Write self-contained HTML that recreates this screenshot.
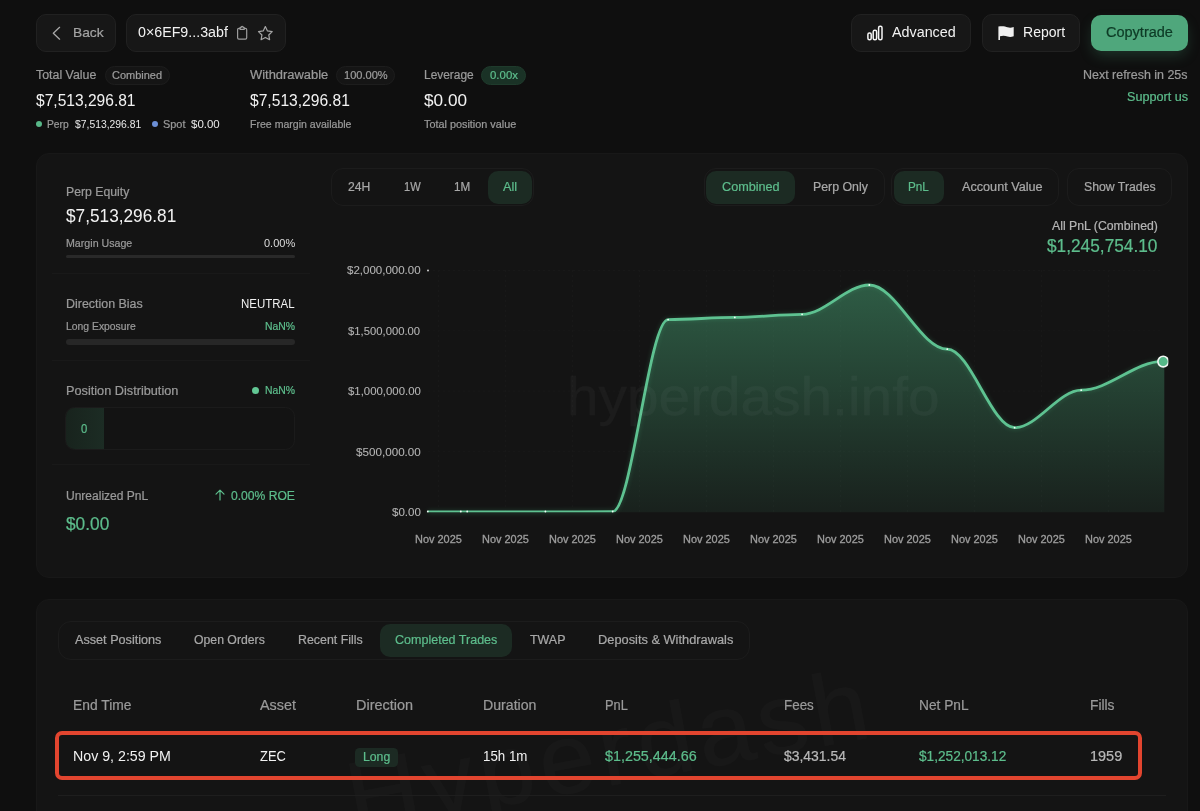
<!DOCTYPE html>
<html><head><meta charset="utf-8"><title>Trader</title>
<style>
html,body{margin:0;padding:0;background:#0f0f0f;width:1200px;height:811px;overflow:hidden;}
body{width:1200px;height:811px;position:relative;overflow:hidden;font-family:"Liberation Sans",sans-serif;}
.t{position:absolute;white-space:pre;line-height:1;transform-origin:0 0;}
.b{position:absolute;box-sizing:border-box;}
svg{position:absolute;left:0;top:0;overflow:visible;}
#root{position:absolute;left:0;top:0;width:1200px;height:811px;overflow:hidden;background:#0f0f0f;}
</style></head><body><div id="root">
<div class="b" style="left:35.80px;top:14.20px;width:80.40px;height:37.50px;background:#171717;border:1px solid #212121;border-radius:10px;"></div>
<svg width="1200" height="811"><path d="M59.6 27.3 L53.3 33.25 L59.6 39.2" fill="none" stroke="#a8a8a8" stroke-width="1.25" stroke-linecap="round" stroke-linejoin="round"/></svg>
<span class="t" style="left:73.30px;top:26.00px;font-size:13.5px;color:#a3a3a3;transform:scaleX(1.0212);-webkit-text-stroke:0.22px #a3a3a3;">Back</span>
<div class="b" style="left:126.40px;top:14.20px;width:159.30px;height:37.50px;background:#171717;border:1px solid #212121;border-radius:10px;"></div>
<span class="t" style="left:137.60px;top:25.25px;font-size:14px;color:#f2f2f2;transform:scaleX(1.0173);">0×6EF9...3abf</span>
<svg width="1200" height="811"><g fill="none" stroke="#9c9c9c" stroke-width="1.2" stroke-linejoin="round" stroke-linecap="round">
<path d="M240 28.4 H238.9 a1.3 1.3 0 0 0 -1.3 1.3 V37.8 a1.3 1.3 0 0 0 1.3 1.3 H245.4 a1.3 1.3 0 0 0 1.3 -1.3 V29.7 a1.3 1.3 0 0 0 -1.3 -1.3 H244.3"/>
<path d="M240 29.3 V28 a0.6 0.6 0 0 1 .6 -.6 H241.1 a1.05 1.05 0 0 1 2.1 0 H243.7 a0.6 0.6 0 0 1 .6 .6 V29.3 Z"/>
<path d="M265.35 26.6 L267.45 30.95 L272.2 31.6 L268.75 34.95 L269.6 39.7 L265.35 37.45 L261.1 39.7 L261.95 34.95 L258.5 31.6 L263.25 30.95 Z" stroke="#a6a6a6"/>
</g></svg>
<div class="b" style="left:851.00px;top:14.20px;width:120.20px;height:37.50px;background:#171717;border:1px solid #212121;border-radius:10px;"></div>
<svg width="1200" height="811"><g fill="none" stroke="#f6f6f6" stroke-width="1.5">
<rect x="867.9" y="32.9" width="3.3" height="6.9" rx="1.5"/>
<rect x="873.2" y="30.2" width="3.4" height="9.6" rx="1.5"/>
<rect x="878.6" y="26.3" width="3.4" height="13.5" rx="1.5"/>
</g></svg>
<span class="t" style="left:891.80px;top:25.25px;font-size:14px;color:#f2f2f2;transform:scaleX(1.0233);">Advanced</span>
<div class="b" style="left:981.50px;top:14.20px;width:98.30px;height:37.50px;background:#171717;border:1px solid #212121;border-radius:10px;"></div>
<svg width="1200" height="811"><path d="M998.4 26.6 V40 H1000 V36.3 C1003 35.2 1005.5 35.8 1007.5 36.5 C1009.5 37.2 1011.5 37.1 1013.7 36.2 V27 C1011.5 27.9 1009.5 28 1007.5 27.3 C1005.5 26.6 1002.5 25.8 998.4 26.6 Z" fill="#efefef"/></svg>
<span class="t" style="left:1023.00px;top:25.25px;font-size:14px;color:#f2f2f2;transform:scaleX(1.0020);">Report</span>
<div class="b" style="left:1090.80px;top:14.80px;width:97.30px;height:36.10px;background:#4fa77c;border-radius:10px;box-shadow:0 6px 14px -2px rgba(79,167,124,.26);"></div>
<span class="t" style="left:1105.80px;top:25.25px;font-size:14px;color:#0d3a25;transform:scaleX(1.0362);-webkit-text-stroke:0.22px #0d3a25;">Copytrade</span>
<span class="t" style="left:36.30px;top:69.25px;font-size:12px;color:#9a9a9a;transform:scaleX(1.0325);-webkit-text-stroke:0.22px #9a9a9a;">Total Value</span>
<div class="b" style="left:104.50px;top:65.50px;width:65.50px;height:19.50px;background:#151515;border:1px solid #1d1d1d;border-radius:10px;"></div>
<span class="t" style="left:112.00px;top:69.75px;font-size:11px;color:#9d9d9d;transform:scaleX(0.9975);-webkit-text-stroke:0.22px #9d9d9d;">Combined</span>
<span class="t" style="left:36.30px;top:92.15px;font-size:16.2px;color:#f2f2f2;transform:scaleX(0.9614);">$7,513,296.81</span>
<div class="b" style="left:35.80px;top:121.20px;width:6.00px;height:6.00px;background:#58b788;border-radius:3px;"></div>
<span class="t" style="left:47.00px;top:119.00px;font-size:10.5px;color:#9a9a9a;transform:scaleX(0.9780);-webkit-text-stroke:0.22px #9a9a9a;">Perp</span>
<span class="t" style="left:75.00px;top:119.00px;font-size:10.5px;color:#e8e8e8;transform:scaleX(0.9862);">$7,513,296.81</span>
<div class="b" style="left:151.50px;top:121.20px;width:6.00px;height:6.00px;background:#6c8fd6;border-radius:3px;"></div>
<span class="t" style="left:163.00px;top:119.00px;font-size:10.5px;color:#9a9a9a;transform:scaleX(1.0405);-webkit-text-stroke:0.22px #9a9a9a;">Spot</span>
<span class="t" style="left:191.30px;top:119.00px;font-size:10.5px;color:#e8e8e8;transform:scaleX(1.0933);">$0.00</span>
<span class="t" style="left:249.70px;top:69.25px;font-size:12px;color:#9a9a9a;transform:scaleX(1.0772);-webkit-text-stroke:0.22px #9a9a9a;">Withdrawable</span>
<div class="b" style="left:336.30px;top:65.50px;width:58.70px;height:19.50px;background:#151515;border:1px solid #1d1d1d;border-radius:10px;"></div>
<span class="t" style="left:343.80px;top:69.75px;font-size:11px;color:#9d9d9d;transform:scaleX(1.0060);-webkit-text-stroke:0.22px #9d9d9d;">100.00%</span>
<span class="t" style="left:249.70px;top:92.15px;font-size:16.2px;color:#f2f2f2;transform:scaleX(0.9643);">$7,513,296.81</span>
<span class="t" style="left:249.70px;top:119.00px;font-size:10.5px;color:#9a9a9a;transform:scaleX(1.0050);-webkit-text-stroke:0.22px #9a9a9a;">Free margin available</span>
<span class="t" style="left:424.00px;top:69.25px;font-size:12px;color:#9a9a9a;transform:scaleX(0.9928);-webkit-text-stroke:0.22px #9a9a9a;">Leverage</span>
<div class="b" style="left:481.30px;top:65.50px;width:45.00px;height:19.50px;background:#1a3226;border:1px solid #1f3b2c;border-radius:10px;"></div>
<span class="t" style="left:489.50px;top:69.75px;font-size:11px;color:#5dbd8c;transform:scaleX(1.0394);-webkit-text-stroke:0.22px #5dbd8c;">0.00x</span>
<span class="t" style="left:424.00px;top:92.15px;font-size:16.2px;color:#f2f2f2;transform:scaleX(1.0617);">$0.00</span>
<span class="t" style="left:424.00px;top:119.00px;font-size:10.5px;color:#9a9a9a;transform:scaleX(1.0323);-webkit-text-stroke:0.22px #9a9a9a;">Total position value</span>
<span class="t" style="left:1083.00px;top:69.25px;font-size:12px;color:#9a9a9a;transform:scaleX(1.0379);-webkit-text-stroke:0.22px #9a9a9a;">Next refresh in 25s</span>
<span class="t" style="left:1126.50px;top:91.25px;font-size:12px;color:#5dbd8c;transform:scaleX(1.0506);-webkit-text-stroke:0.22px #5dbd8c;">Support us</span>
<div class="b" style="left:35.60px;top:153.20px;width:1152.10px;height:424.50px;background:#141414;border:1px solid #181818;border-radius:13px;"></div>
<span class="t" style="left:65.70px;top:186.10px;font-size:12.3px;color:#9a9a9a;transform:scaleX(0.9971);-webkit-text-stroke:0.22px #9a9a9a;">Perp Equity</span>
<span class="t" style="left:65.70px;top:208.35px;font-size:17.8px;color:#f2f2f2;transform:scaleX(0.9698);">$7,513,296.81</span>
<span class="t" style="left:65.70px;top:238.00px;font-size:10.5px;color:#9a9a9a;transform:scaleX(1.0141);-webkit-text-stroke:0.22px #9a9a9a;">Margin Usage</span>
<span class="t" style="left:263.80px;top:238.00px;font-size:10.5px;color:#dcdcdc;transform:scaleX(1.0487);">0.00%</span>
<div class="b" style="left:65.50px;top:255.00px;width:229.50px;height:3.00px;background:#292929;border-radius:1.5px;"></div>
<div class="b" style="left:52.00px;top:272.50px;width:258.00px;height:1.00px;background:#191919;"></div>
<span class="t" style="left:65.70px;top:298.10px;font-size:12.3px;color:#9a9a9a;transform:scaleX(1.0114);-webkit-text-stroke:0.22px #9a9a9a;">Direction Bias</span>
<span class="t" style="left:241.40px;top:298.10px;font-size:12.3px;color:#f2f2f2;transform:scaleX(0.9332);">NEUTRAL</span>
<span class="t" style="left:65.70px;top:321.00px;font-size:10.5px;color:#9a9a9a;transform:scaleX(0.9883);-webkit-text-stroke:0.22px #9a9a9a;">Long Exposure</span>
<span class="t" style="left:265.00px;top:321.00px;font-size:10.5px;color:#5dbd8c;transform:scaleX(0.9897);-webkit-text-stroke:0.22px #5dbd8c;">NaN%</span>
<div class="b" style="left:65.50px;top:339.00px;width:229.50px;height:6.00px;background:#272727;border-radius:3px;"></div>
<div class="b" style="left:52.00px;top:360.00px;width:258.00px;height:1.00px;background:#191919;"></div>
<span class="t" style="left:65.70px;top:385.10px;font-size:12.3px;color:#9a9a9a;transform:scaleX(1.0339);-webkit-text-stroke:0.22px #9a9a9a;">Position Distribution</span>
<div class="b" style="left:252.00px;top:387.00px;width:7.00px;height:7.00px;background:#62c794;border-radius:3.5px;"></div>
<span class="t" style="left:265.00px;top:385.00px;font-size:10.5px;color:#5dbd8c;transform:scaleX(0.9897);-webkit-text-stroke:0.22px #5dbd8c;">NaN%</span>
<div class="b" style="left:65.00px;top:406.80px;width:229.80px;height:43.20px;background:#131313;border:1px solid #1b1b1b;border-radius:9.5px;overflow:hidden;"></div>
<div class="b" style="left:66.00px;top:407.80px;width:37.80px;height:41.20px;background:linear-gradient(90deg,#18231d,#1c2c24);border-radius:8.5px 0 0 8.5px;"></div>
<span class="t" style="left:81.20px;top:423.10px;font-size:12.3px;color:#5dbd8c;transform:scaleX(0.9164);-webkit-text-stroke:0.22px #5dbd8c;">0</span>
<div class="b" style="left:52.00px;top:464.00px;width:258.00px;height:1.00px;background:#191919;"></div>
<span class="t" style="left:65.70px;top:490.10px;font-size:12.3px;color:#9a9a9a;transform:scaleX(0.9776);-webkit-text-stroke:0.22px #9a9a9a;">Unrealized PnL</span>
<span class="t" style="left:231.00px;top:490.10px;font-size:12.3px;color:#5dbd8c;transform:scaleX(0.9846);-webkit-text-stroke:0.22px #5dbd8c;">0.00% ROE</span>
<svg width="1200" height="811"><path d="M220 500 V490.2 M216 494.2 L220 490.2 L224 494.2" fill="none" stroke="#5dbd8c" stroke-width="1.2" stroke-linecap="round" stroke-linejoin="round"/></svg>
<span class="t" style="left:65.70px;top:516.35px;font-size:17.8px;color:#5dbd8c;transform:scaleX(0.9717);-webkit-text-stroke:0.22px #5dbd8c;">$0.00</span>
<div class="b" style="left:331.20px;top:168.00px;width:202.60px;height:37.50px;background:#141414;border:1px solid #1c1c1c;border-radius:12px;"></div>
<span class="t" style="left:348.40px;top:181.10px;font-size:12.3px;color:#a8a8a8;transform:scaleX(0.9884);-webkit-text-stroke:0.22px #a8a8a8;">24H</span>
<span class="t" style="left:404.00px;top:181.10px;font-size:12.3px;color:#a8a8a8;transform:scaleX(0.9027);-webkit-text-stroke:0.22px #a8a8a8;">1W</span>
<span class="t" style="left:454.40px;top:181.10px;font-size:12.3px;color:#a8a8a8;transform:scaleX(0.9518);-webkit-text-stroke:0.22px #a8a8a8;">1M</span>
<div class="b" style="left:488.30px;top:170.80px;width:44.20px;height:33.40px;background:#1c2b23;border-radius:10px;"></div>
<span class="t" style="left:503.30px;top:181.10px;font-size:12.3px;color:#5dbd8c;transform:scaleX(1.0301);-webkit-text-stroke:0.22px #5dbd8c;">All</span>
<div class="b" style="left:703.50px;top:168.00px;width:181.80px;height:37.50px;background:#141414;border:1px solid #1c1c1c;border-radius:12px;"></div>
<div class="b" style="left:706.20px;top:170.80px;width:88.80px;height:33.40px;background:#1c2b23;border-radius:10px;"></div>
<span class="t" style="left:721.80px;top:181.10px;font-size:12.3px;color:#5dbd8c;transform:scaleX(1.0281);-webkit-text-stroke:0.22px #5dbd8c;">Combined</span>
<span class="t" style="left:812.60px;top:181.10px;font-size:12.3px;color:#a8a8a8;transform:scaleX(1.0027);-webkit-text-stroke:0.22px #a8a8a8;">Perp Only</span>
<div class="b" style="left:890.50px;top:168.00px;width:168.30px;height:37.50px;background:#141414;border:1px solid #1c1c1c;border-radius:12px;"></div>
<div class="b" style="left:893.70px;top:170.80px;width:50.10px;height:33.40px;background:#1c2b23;border-radius:10px;"></div>
<span class="t" style="left:908.30px;top:181.10px;font-size:12.3px;color:#5dbd8c;transform:scaleX(0.9527);-webkit-text-stroke:0.22px #5dbd8c;">PnL</span>
<span class="t" style="left:961.80px;top:181.10px;font-size:12.3px;color:#a8a8a8;transform:scaleX(1.0280);-webkit-text-stroke:0.22px #a8a8a8;">Account Value</span>
<div class="b" style="left:1066.80px;top:168.00px;width:105.70px;height:37.50px;background:#141414;border:1px solid #1c1c1c;border-radius:12px;"></div>
<span class="t" style="left:1083.80px;top:181.10px;font-size:12.3px;color:#a8a8a8;transform:scaleX(0.9976);-webkit-text-stroke:0.22px #a8a8a8;">Show Trades</span>
<span class="t" style="left:1052.00px;top:220.10px;font-size:12.3px;color:#b4b4b4;transform:scaleX(0.9971);-webkit-text-stroke:0.22px #b4b4b4;">All PnL (Combined)</span>
<span class="t" style="left:1046.80px;top:238.35px;font-size:17.8px;color:#5dbd8c;transform:scaleX(0.9716);-webkit-text-stroke:0.22px #5dbd8c;">$1,245,754.10</span>
<span class="t" style="left:346.80px;top:265.00px;font-size:10.5px;color:#b5b5b5;transform:scaleX(1.0965);-webkit-text-stroke:0.08px #b5b5b5;">$2,000,000.00</span>
<span class="t" style="left:348.30px;top:326.00px;font-size:10.5px;color:#b5b5b5;transform:scaleX(1.0741);-webkit-text-stroke:0.08px #b5b5b5;">$1,500,000.00</span>
<span class="t" style="left:347.60px;top:386.00px;font-size:10.5px;color:#b5b5b5;transform:scaleX(1.0845);-webkit-text-stroke:0.08px #b5b5b5;">$1,000,000.00</span>
<span class="t" style="left:355.60px;top:447.00px;font-size:10.5px;color:#b5b5b5;transform:scaleX(1.1101);-webkit-text-stroke:0.08px #b5b5b5;">$500,000.00</span>
<span class="t" style="left:391.50px;top:507.00px;font-size:10.5px;color:#b5b5b5;transform:scaleX(1.1010);-webkit-text-stroke:0.08px #b5b5b5;">$0.00</span>
<span class="t" style="left:415.10px;top:534.00px;font-size:10.5px;color:#9d9d9d;transform:scaleX(1.0414);-webkit-text-stroke:0.3px #9d9d9d;">Nov 2025</span>
<span class="t" style="left:482.10px;top:534.00px;font-size:10.5px;color:#9d9d9d;transform:scaleX(1.0414);-webkit-text-stroke:0.3px #9d9d9d;">Nov 2025</span>
<span class="t" style="left:549.10px;top:534.00px;font-size:10.5px;color:#9d9d9d;transform:scaleX(1.0414);-webkit-text-stroke:0.3px #9d9d9d;">Nov 2025</span>
<span class="t" style="left:616.10px;top:534.00px;font-size:10.5px;color:#9d9d9d;transform:scaleX(1.0414);-webkit-text-stroke:0.3px #9d9d9d;">Nov 2025</span>
<span class="t" style="left:683.10px;top:534.00px;font-size:10.5px;color:#9d9d9d;transform:scaleX(1.0414);-webkit-text-stroke:0.3px #9d9d9d;">Nov 2025</span>
<span class="t" style="left:750.10px;top:534.00px;font-size:10.5px;color:#9d9d9d;transform:scaleX(1.0414);-webkit-text-stroke:0.3px #9d9d9d;">Nov 2025</span>
<span class="t" style="left:817.10px;top:534.00px;font-size:10.5px;color:#9d9d9d;transform:scaleX(1.0414);-webkit-text-stroke:0.3px #9d9d9d;">Nov 2025</span>
<span class="t" style="left:884.10px;top:534.00px;font-size:10.5px;color:#9d9d9d;transform:scaleX(1.0414);-webkit-text-stroke:0.3px #9d9d9d;">Nov 2025</span>
<span class="t" style="left:951.10px;top:534.00px;font-size:10.5px;color:#9d9d9d;transform:scaleX(1.0414);-webkit-text-stroke:0.3px #9d9d9d;">Nov 2025</span>
<span class="t" style="left:1018.10px;top:534.00px;font-size:10.5px;color:#9d9d9d;transform:scaleX(1.0414);-webkit-text-stroke:0.3px #9d9d9d;">Nov 2025</span>
<span class="t" style="left:1085.10px;top:534.00px;font-size:10.5px;color:#9d9d9d;transform:scaleX(1.0414);-webkit-text-stroke:0.3px #9d9d9d;">Nov 2025</span>
<svg width="1200" height="811">
<defs><linearGradient id="ag" gradientUnits="userSpaceOnUse" x1="0" y1="285" x2="0" y2="512">
<stop offset="0" stop-color="#4caf7d" stop-opacity="0.46"/><stop offset="1" stop-color="#4caf7d" stop-opacity="0.085"/></linearGradient>
<clipPath id="cp"><rect x="420" y="260" width="760" height="252.3"/></clipPath><filter id="gl" x="-5%" y="-10%" width="110%" height="120%"><feGaussianBlur stdDeviation="2.2"/></filter></defs>
<g stroke="#1d1d1d" stroke-width="1" stroke-dasharray="2 3" fill="none" opacity="0.45"><path d="M438.5 270 V512"/><path d="M505.5 270 V512"/><path d="M572.5 270 V512"/><path d="M639.5 270 V512"/><path d="M706.5 270 V512"/><path d="M773.5 270 V512"/><path d="M840.5 270 V512"/><path d="M907.5 270 V512"/><path d="M974.5 270 V512"/><path d="M1041.5 270 V512"/><path d="M1108.5 270 V512"/><path d="M428 270.5 H1163"/><path d="M428 330.8 H1163"/><path d="M428 391.2 H1163"/><path d="M428 451.6 H1163"/></g>
<path d="M427.80 512.00 C439.02 512.00 449.58 512.00 460.80 512.00 C462.98 512.00 465.02 512.00 467.20 512.00 C493.79 512.00 518.81 512.00 545.40 512.00 C568.28 512.00 589.82 511.60 612.70 511.60 C631.54 511.60 649.26 319.60 668.10 319.60 C690.78 319.60 712.12 317.40 734.80 317.40 C757.68 317.40 779.22 314.30 802.10 314.30 C824.95 314.30 846.45 285.00 869.30 285.00 C895.82 285.00 920.78 349.20 947.30 349.20 C970.18 349.20 991.72 427.70 1014.60 427.70 C1037.24 427.70 1058.56 390.20 1081.20 390.20 C1108.88 390.20 1134.92 361.40 1162.60 361.40 L1164.3 361.40 L1164.3 512.3 L427.80 512.3 Z" fill="url(#ag)"/>
<path d="M427.80 512.00 C439.02 512.00 449.58 512.00 460.80 512.00 C462.98 512.00 465.02 512.00 467.20 512.00 C493.79 512.00 518.81 512.00 545.40 512.00 C568.28 512.00 589.82 511.60 612.70 511.60 C631.54 511.60 649.26 319.60 668.10 319.60 C690.78 319.60 712.12 317.40 734.80 317.40 C757.68 317.40 779.22 314.30 802.10 314.30 C824.95 314.30 846.45 285.00 869.30 285.00 C895.82 285.00 920.78 349.20 947.30 349.20 C970.18 349.20 991.72 427.70 1014.60 427.70 C1037.24 427.70 1058.56 390.20 1081.20 390.20 C1108.88 390.20 1134.92 361.40 1162.60 361.40" fill="none" stroke="#4caf7d" stroke-width="4" opacity="0.22" filter="url(#gl)"/>
<path d="M427.80 512.00 C439.02 512.00 449.58 512.00 460.80 512.00 C462.98 512.00 465.02 512.00 467.20 512.00 C493.79 512.00 518.81 512.00 545.40 512.00 C568.28 512.00 589.82 511.60 612.70 511.60 C631.54 511.60 649.26 319.60 668.10 319.60 C690.78 319.60 712.12 317.40 734.80 317.40 C757.68 317.40 779.22 314.30 802.10 314.30 C824.95 314.30 846.45 285.00 869.30 285.00 C895.82 285.00 920.78 349.20 947.30 349.20 C970.18 349.20 991.72 427.70 1014.60 427.70 C1037.24 427.70 1058.56 390.20 1081.20 390.20 C1108.88 390.20 1134.92 361.40 1162.60 361.40" fill="none" stroke="#5ec291" stroke-width="2.8" stroke-linejoin="round" clip-path="url(#cp)"/>
<g fill="#f4fff8"><circle cx="427.8" cy="511.5" r="0.9"/><circle cx="460.8" cy="511.5" r="0.9"/><circle cx="467.2" cy="511.5" r="0.9"/><circle cx="545.4" cy="511.5" r="0.9"/><circle cx="612.7" cy="511.5" r="0.9"/><circle cx="668.1" cy="319.6" r="0.9"/><circle cx="734.8" cy="317.4" r="0.9"/><circle cx="802.1" cy="314.3" r="0.9"/><circle cx="869.3" cy="285.0" r="0.9"/><circle cx="947.3" cy="349.2" r="0.9"/><circle cx="1014.6" cy="427.7" r="0.9"/><circle cx="1081.2" cy="390.2" r="0.9"/><circle cx="428" cy="270.5" r="0.9" fill="#e0e0e0"/></g>
<clipPath id="cd"><rect x="1150" y="350" width="18.3" height="24"/></clipPath><circle cx="1163.2" cy="361.6" r="5.3" fill="#55b888" stroke="#f1f6f3" stroke-width="1.6" clip-path="url(#cd)"/>
</svg>
<span class="t" style="left:566.50px;top:370.25px;font-size:53px;color:#fff;transform:scaleX(1.0714);-webkit-text-stroke:0.3px #fff;opacity:0.03;">hyperdash.info</span>
<div class="b" style="left:35.60px;top:599.20px;width:1152.10px;height:240.80px;background:#141414;border:1px solid #181818;border-radius:13px;"></div>
<div class="b" style="left:57.50px;top:621.00px;width:692.50px;height:38.50px;background:#141414;border:1px solid #1c1c1c;border-radius:13px;"></div>
<span class="t" style="left:75.20px;top:634.00px;font-size:12.5px;color:#a8a8a8;transform:scaleX(1.0113);-webkit-text-stroke:0.22px #a8a8a8;">Asset Positions</span>
<span class="t" style="left:194.20px;top:634.00px;font-size:12.5px;color:#a8a8a8;transform:scaleX(0.9799);-webkit-text-stroke:0.22px #a8a8a8;">Open Orders</span>
<span class="t" style="left:297.90px;top:634.00px;font-size:12.5px;color:#a8a8a8;transform:scaleX(0.9906);-webkit-text-stroke:0.22px #a8a8a8;">Recent Fills</span>
<div class="b" style="left:380.30px;top:624.00px;width:132.10px;height:33.30px;background:#1c2b23;border-radius:10px;"></div>
<span class="t" style="left:395.20px;top:634.00px;font-size:12.5px;color:#5dbd8c;transform:scaleX(1.0020);-webkit-text-stroke:0.22px #5dbd8c;">Completed Trades</span>
<span class="t" style="left:530.20px;top:634.00px;font-size:12.5px;color:#a8a8a8;transform:scaleX(0.9937);-webkit-text-stroke:0.22px #a8a8a8;">TWAP</span>
<span class="t" style="left:598.30px;top:634.00px;font-size:12.5px;color:#a8a8a8;transform:scaleX(1.0250);-webkit-text-stroke:0.22px #a8a8a8;">Deposits &amp; Withdrawals</span>
<span class="t" style="left:354px;top:748.4px;font-size:100px;letter-spacing:5.5px;color:#fff;opacity:0.017;-webkit-text-stroke:0.5px #fff;transform:rotate(-10.5deg);transform-origin:0 84.7px">Hyperdash</span>
<span class="t" style="left:73.00px;top:698.25px;font-size:14px;color:#9a9a9a;transform:scaleX(0.9877);-webkit-text-stroke:0.22px #9a9a9a;">End Time</span>
<span class="t" style="left:259.80px;top:698.25px;font-size:14px;color:#9a9a9a;transform:scaleX(1.0257);-webkit-text-stroke:0.22px #9a9a9a;">Asset</span>
<span class="t" style="left:356.00px;top:698.25px;font-size:14px;color:#9a9a9a;transform:scaleX(1.0317);-webkit-text-stroke:0.22px #9a9a9a;">Direction</span>
<span class="t" style="left:483.20px;top:698.25px;font-size:14px;color:#9a9a9a;transform:scaleX(1.0106);-webkit-text-stroke:0.22px #9a9a9a;">Duration</span>
<span class="t" style="left:605.20px;top:698.25px;font-size:14px;color:#9a9a9a;transform:scaleX(0.9143);-webkit-text-stroke:0.22px #9a9a9a;">PnL</span>
<span class="t" style="left:783.60px;top:698.25px;font-size:14px;color:#9a9a9a;transform:scaleX(0.9574);-webkit-text-stroke:0.22px #9a9a9a;">Fees</span>
<span class="t" style="left:918.50px;top:698.25px;font-size:14px;color:#9a9a9a;transform:scaleX(0.9790);-webkit-text-stroke:0.22px #9a9a9a;">Net PnL</span>
<span class="t" style="left:1090.20px;top:698.25px;font-size:14px;color:#9a9a9a;transform:scaleX(0.9849);-webkit-text-stroke:0.22px #9a9a9a;">Fills</span>
<span class="t" style="left:73.00px;top:749.25px;font-size:14px;color:#f2f2f2;transform:scaleX(1.0145);">Nov 9, 2:59 PM</span>
<span class="t" style="left:259.80px;top:749.25px;font-size:14px;color:#f2f2f2;transform:scaleX(0.9214);">ZEC</span>
<div class="b" style="left:355.00px;top:747.50px;width:42.70px;height:19.30px;background:#1c2a23;border-radius:4.5px;"></div>
<span class="t" style="left:363.20px;top:751.25px;font-size:12px;color:#5dbd8c;transform:scaleX(1.0192);-webkit-text-stroke:0.22px #5dbd8c;">Long</span>
<span class="t" style="left:483.00px;top:749.25px;font-size:14px;color:#f2f2f2;transform:scaleX(0.9510);">15h 1m</span>
<span class="t" style="left:605.20px;top:749.25px;font-size:14px;color:#5dbd8c;transform:scaleX(1.0235);-webkit-text-stroke:0.22px #5dbd8c;">$1,255,444.66</span>
<span class="t" style="left:783.60px;top:749.25px;font-size:14px;color:#b8b8b8;transform:scaleX(0.9950);-webkit-text-stroke:0.22px #b8b8b8;">$3,431.54</span>
<span class="t" style="left:918.50px;top:749.25px;font-size:14px;color:#5dbd8c;transform:scaleX(0.9743);-webkit-text-stroke:0.22px #5dbd8c;">$1,252,013.12</span>
<span class="t" style="left:1089.80px;top:749.25px;font-size:14px;color:#b8b8b8;transform:scaleX(1.0345);-webkit-text-stroke:0.22px #b8b8b8;">1959</span>
<div class="b" style="left:55.40px;top:731.40px;width:1086.90px;height:48.40px;border:4.4px solid #e2452f;border-radius:7px;"></div>
<div class="b" style="left:57.50px;top:795.30px;width:1108.50px;height:1.00px;background:#1e1e1e;"></div>
</div></body></html>
